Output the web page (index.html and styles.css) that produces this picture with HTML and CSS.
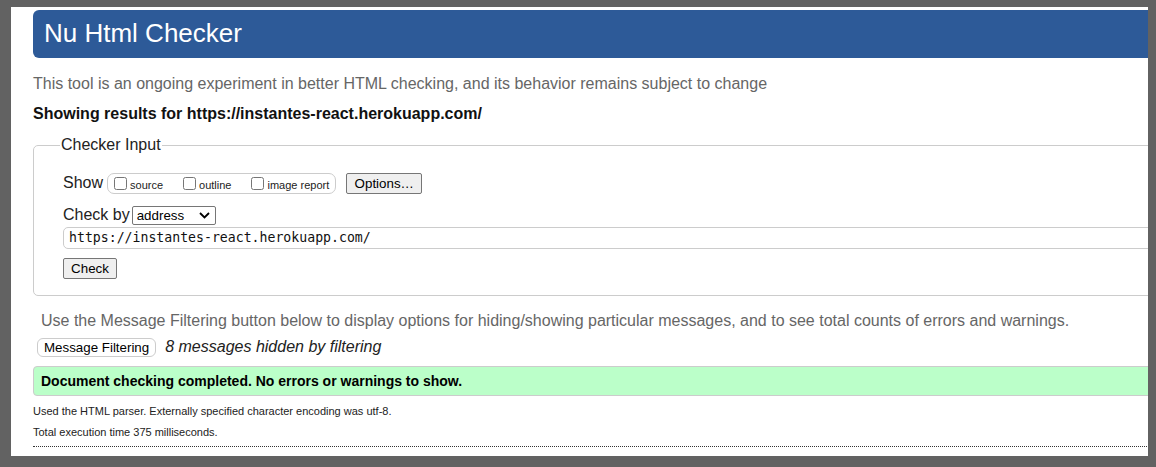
FILE: index.html
```html
<!DOCTYPE html>
<html lang="en">
<head>
<meta charset="utf-8">
<title>Showing results for https://instantes-react.herokuapp.com/ - Nu Html Checker</title>
<link rel="stylesheet" href="styles.css">
</head>
<body>
<div class="viewport">
  <div class="page">
    <h1 class="title">Nu Html Checker</h1>
    <p class="intro">This tool is an ongoing experiment in better HTML checking, and its behavior remains subject to change</p>
    <p class="showing">Showing results for https://instantes-react.herokuapp.com/</p>
    <form class="checker">
      <fieldset class="fieldset">
        <legend class="legend">Checker Input</legend>
        <div class="row show-row">
          <span class="row-label">Show</span>
          <span class="opts">
            <label class="opt"><input type="checkbox" class="cb"><span>source</span></label>
            <label class="opt"><input type="checkbox" class="cb"><span>outline</span></label>
            <label class="opt"><input type="checkbox" class="cb"><span>image report</span></label>
          </span>
          <button type="button" class="btn btn-options">Options…</button>
        </div>
        <div class="row checkby-row">
          <span class="row-label">Check by</span>
          <span class="select">address<svg class="chev" width="11" height="7" viewBox="0 0 11 7"><path d="M1 1 L5.5 5.5 L10 1" fill="none" stroke="#000" stroke-width="1.8"/></svg></span>
        </div>
        <div class="url">https://instantes-react.herokuapp.com/</div>
        <div class="row check-row">
          <button type="button" class="btn btn-check">Check</button>
        </div>
      </fieldset>
    </form>
    <p class="filter-info">Use the Message Filtering button below to display options for hiding/showing particular messages, and to see total counts of errors and warnings.</p>
    <div class="filter-row">
      <button type="button" class="btn btn-filter">Message Filtering</button>
      <span class="hidden-count">8 messages hidden by filtering</span>
    </div>
    <p class="success">Document checking completed. No errors or warnings to show.</p>
    <p class="details">Used the HTML parser. Externally specified character encoding was utf-8.</p>
    <p class="details time">Total execution time 375 milliseconds.</p>
    <div class="rule"></div>
  </div>
</div>
</body>
</html>
```
FILE: styles.css
```css
html, body {
  margin: 0;
  padding: 0;
}
body {
  background: #626262;
  width: 1156px;
  height: 467px;
  padding: 7px 0 0 11px;
  box-sizing: border-box;
  font-family: "Liberation Sans", Arial, sans-serif;
  overflow: hidden;
}
.viewport {
  width: 1137px;
  height: 449px;
  background: #fff;
  overflow: hidden;
}
.page {
  width: 1300px;
  padding: 3px 0 0 22px;
  box-sizing: border-box;
}
.title {
  margin: 0;
  height: 48px;
  background: #2d5a98;
  border-radius: 6px;
  color: #fff;
  font-weight: normal;
  font-size: 26px;
  line-height: 46px;
  padding-left: 11px;
}
.intro {
  margin: 17px 0 0;
  font-size: 16px;
  line-height: 18px;
  color: #666;
}
.showing {
  margin: 12px 0 0;
  font-size: 16px;
  line-height: 18px;
  font-weight: bold;
  color: #111;
}
.checker {
  margin: 13px 0 0;
}
.fieldset {
  margin: 0;
  border: 1px solid #ccc;
  border-radius: 5px;
  padding: 18px 0 16px 29px;
}
.legend {
  font-size: 16px;
  color: #222;
  padding: 0 1px;
  margin-left: -3px;
  line-height: 18px;
}
.row {
  display: flex;
  align-items: center;
}
.row-label {
  font-size: 16px;
  color: #222;
}
.show-row {
  height: 22px;
}
.opts {
  display: inline-flex;
  align-items: center;
  height: 19px;
  border: 1px solid #ccc;
  border-radius: 7px;
  margin-left: 4px;
  padding: 0 6px 0 6px;
  gap: 20px;
}
.opt {
  display: inline-flex;
  align-items: center;
  font-size: 11px;
  color: #222;
  white-space: nowrap;
}
.opt span {
  position: relative;
  top: 2px;
}
.cb {
  width: 13px;
  height: 13px;
  margin: 0 3px 0 0;
}
.btn {
  font-family: "Liberation Sans", Arial, sans-serif;
  font-size: 13.33px;
  color: #000;
  background: #efefef;
  border: 1px solid #767676;
  border-radius: 2px;
  padding: 0 6px;
  height: 21px;
  line-height: 19px;
  white-space: nowrap;
}
.btn-options {
  margin-left: 10px;
  width: 76px;
}
.checkby-row {
  margin-top: 11px;
  height: 20px;
}
.select {
  display: inline-flex;
  align-items: center;
  justify-content: space-between;
  box-sizing: border-box;
  width: 84px;
  height: 19px;
  margin-left: 2px;
  border: 1px solid #767676;
  border-radius: 2px;
  padding: 0 5px 0 4px;
  font-size: 13.33px;
  color: #000;
}
.chev {
  display: block;
}
.url {
  margin-top: 2px;
  height: 22px;
  box-sizing: border-box;
  border: 1px solid #ccc;
  border-radius: 5px;
  padding-left: 5px;
  font-family: "DejaVu Sans Mono", monospace;
  font-size: 13.2px;
  line-height: 20px;
  color: #111;
}
.check-row {
  margin-top: 9px;
}
.btn-check {
  width: 54px;
}
.filter-info {
  margin: 16px 0 0 8px;
  font-size: 16px;
  line-height: 18px;
  color: #666;
}
.filter-row {
  display: flex;
  align-items: center;
  margin: 7px 0 0 4px;
  height: 20px;
}
.btn-filter {
  background: #fff;
  border: 1px solid #ccc;
  border-radius: 6px;
  height: 19px;
  line-height: 17px;
  padding: 0 6px;
}
.hidden-count {
  margin-left: 9px;
  font-style: italic;
  font-size: 16px;
  color: #222;
}
.success {
  margin: 9px 0 0;
  height: 30px;
  box-sizing: border-box;
  background: #bbffc9;
  border: 1px solid #ccc;
  border-radius: 4px;
  padding-left: 7px;
  font-weight: bold;
  font-size: 14px;
  line-height: 28px;
  color: #000;
}
.details {
  margin: 8px 0 0;
  font-size: 11px;
  line-height: 14px;
  color: #222;
}
.time {
  margin-top: 7px;
}
.rule {
  margin-top: 7px;
  border-top: 1px dotted #333;
}
```
